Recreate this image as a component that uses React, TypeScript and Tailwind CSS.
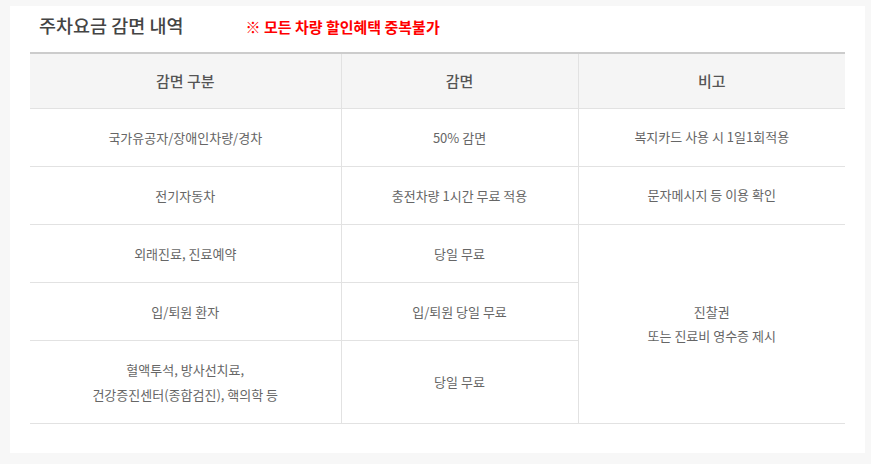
const rows = [
  { kind: "국가유공자/장애인차량/경차", off: "50% 감면", note: "복지카드 사용 시 1일1회적용" },
  { kind: "전기자동차", off: "충전차량 1시간 무료 적용", note: "문자메시지 등 이용 확인" },
];

const font = { fontFamily: '"Noto Sans CJK KR", "Noto Sans", sans-serif' };

export default function App() {
  const td = "border-b border-r border-[#e2e2e2] text-center text-[13px] text-[#666] leading-[25px]";
  const th = "border-b border-[#e2e2e2] text-[15px] font-medium text-[#555]";
  return (
    <div className="min-h-[464px] w-full bg-[#f7f7f7] pt-[6px] pl-[10px] pr-[6px] pb-[11px]" style={font}>
      <div className="h-[447px] bg-white px-[20px] pt-[2px]">
        <div className="flex items-center h-[36px] pl-[9px] mb-[8px]">
          <h2 className="text-[18.5px] font-medium text-[#444]">주차요금 감면 내역</h2>
          <span className="ml-[62px] text-[15px] font-bold text-[#ff0000] mt-[2px]">※ 모든 차량 할인혜택 중복불가</span>
        </div>
        <table className="w-[815px] table-fixed border-collapse border-t-2 border-[#cccccc]">
          <colgroup>
            <col className="w-[311px]" />
            <col className="w-[237px]" />
            <col className="w-[267px]" />
          </colgroup>
          <thead>
            <tr className="h-[55px] bg-[#f5f5f5]">
              <th className={`${th} border-r`}>감면 구분</th>
              <th className={`${th} border-r`}>감면</th>
              <th className={th}>비고</th>
            </tr>
          </thead>
          <tbody>
            {rows.map((r) => (
              <tr key={r.kind} className="h-[58px]">
                <td className={td}>{r.kind}</td>
                <td className={td}>{r.off}</td>
                <td className="border-b border-[#e2e2e2] text-center text-[13px] text-[#666]">{r.note}</td>
              </tr>
            ))}
            <tr className="h-[58px]">
              <td className={td}>외래진료, 진료예약</td>
              <td className={td}>당일 무료</td>
              <td rowSpan={3} className="border-b border-[#e2e2e2] text-center text-[13px] text-[#666] leading-[24px]">
                진찰권
                <br />
                또는 진료비 영수증 제시
              </td>
            </tr>
            <tr className="h-[58px]">
              <td className={td}>입/퇴원 환자</td>
              <td className={td}>입/퇴원 당일 무료</td>
            </tr>
            <tr className="h-[83px]">
              <td className={td}>
                혈액투석, 방사선치료,
                <br />
                건강증진센터(종합검진), 핵의학 등
              </td>
              <td className={td}>당일 무료</td>
            </tr>
          </tbody>
        </table>
      </div>
    </div>
  );
}
